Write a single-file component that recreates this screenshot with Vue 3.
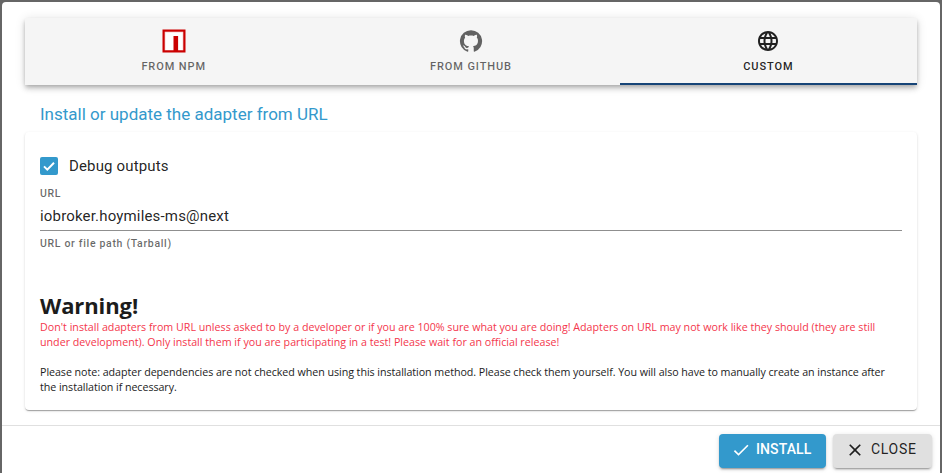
<script setup>
const tabs = [
  { label: 'From npm', icon: 'npm' },
  { label: 'From GitHub', icon: 'github' },
  { label: 'Custom', icon: 'globe', active: true },
]
</script>

<template>
  <div class="backdrop">
    <div class="dialog">
      <div class="content">
        <div class="tabs">
          <div v-for="t in tabs" :key="t.label" class="tab" :class="{ active: t.active }">
            <svg v-if="t.icon === 'npm'" class="ic" width="24" height="24" viewBox="0 0 24 24">
              <rect x="0.5" y="0.5" width="23" height="23" fill="#cb0000" />
              <rect x="2.7" y="2.7" width="18.6" height="18.6" fill="#f6d5d5" />
              <rect x="3.5" y="3.5" width="17" height="17.5" fill="#fff" />
              <rect x="11.5" y="7" width="4.6" height="15" fill="#cb0000" />
            </svg>
            <svg v-else-if="t.icon === 'github'" class="ic" width="24" height="24" viewBox="0 0 24 24">
              <path fill="currentColor" d="M12 1.27a11 11 0 0 0-3.48 21.46c.55.09.73-.28.73-.55v-1.84c-3.03.64-3.67-1.46-3.67-1.46-.55-1.29-1.28-1.65-1.28-1.65-.92-.65.1-.65.1-.65 1.1 0 1.73 1.1 1.73 1.1.92 1.65 2.57 1.2 3.21.92a2.16 2.16 0 0 1 .64-1.47c-2.47-.27-5.04-1.19-5.04-5.5 0-1.1.46-2.1 1.2-2.84a3.76 3.76 0 0 1 0-2.93s.91-.28 3.11 1.1c1.8-.49 3.7-.49 5.5 0 2.1-1.38 3.02-1.1 3.02-1.1a3.76 3.76 0 0 1 0 2.93c.83.74 1.2 1.74 1.2 2.94 0 4.21-2.57 5.13-5.04 5.41.45.37.82.92.82 2.02v3.03c0 .27.1.64.73.55A11 11 0 0 0 12 1.27" />
            </svg>
            <svg v-else class="ic" width="24" height="24" viewBox="0 0 24 24">
              <path fill="currentColor" d="M11.99 2C6.47 2 2 6.48 2 12s4.47 10 9.99 10C17.52 22 22 17.52 22 12S17.52 2 11.99 2zm6.93 6h-2.95c-.32-1.25-.78-2.45-1.38-3.56 1.84.63 3.37 1.91 4.33 3.56zM12 4.04c.83 1.2 1.48 2.53 1.91 3.96h-3.82c.43-1.43 1.08-2.76 1.91-3.96zM4.26 14C4.1 13.36 4 12.69 4 12s.1-1.36.26-2h3.38c-.08.66-.14 1.32-.14 2 0 .68.06 1.34.14 2H4.26zm.82 2h2.95c.32 1.25.78 2.45 1.38 3.56-1.84-.63-3.37-1.9-4.33-3.56zm2.95-8H5.08c.96-1.66 2.49-2.93 4.33-3.56C8.81 5.55 8.35 6.75 8.03 8zM12 19.96c-.83-1.2-1.48-2.53-1.91-3.96h3.82c-.43 1.43-1.08 2.76-1.91 3.96zM14.34 14H9.66c-.09-.66-.16-1.32-.16-2 0-.68.07-1.35.16-2h4.68c.09.65.16 1.32.16 2 0 .68-.07 1.34-.16 2zm.25 5.56c.6-1.11 1.06-2.31 1.38-3.56h2.95c-.96 1.65-2.49 2.93-4.33 3.56zM16.36 14c.08-.66.14-1.32.14-2 0-.68-.06-1.34-.14-2h3.38c.16.64.26 1.31.26 2s-.1 1.36-.26 2h-3.38z" />
            </svg>
            <span class="tab-label">{{ t.label }}</span>
          </div>
        </div>

        <div class="title">Install or update the adapter from URL</div>

        <div class="card">
          <label class="check-row">
            <span class="box">
              <svg width="18" height="18" viewBox="0 0 18 18">
                <path d="M4 9.4l3.3 3.2L14 5.8" fill="none" stroke="#fff" stroke-width="2" />
              </svg>
            </span>
            <span class="check-label">Debug outputs</span>
          </label>

          <div class="field">
            <div class="field-label">URL</div>
            <div class="field-value">iobroker.hoymiles-ms@next</div>
            <div class="field-help">URL or file path (Tarball)</div>
          </div>

          <h2 class="warn-title">Warning!</h2>
          <p class="warn-text">Don't install adapters from URL unless asked to by a developer or if you are 100% sure what you are doing! Adapters on URL may not work like they should (they are still under development). Only install them if you are participating in a test! Please wait for an official release!</p>
          <p class="note-text">Please note: adapter dependencies are not checked when using this installation method. Please check them yourself. You will also have to manually create an instance after the installation if necessary.</p>
        </div>
      </div>

      <div class="actions">
        <button class="btn primary">
          <svg width="20" height="20" viewBox="0 0 24 24"><path fill="currentColor" d="M9 16.17 4.83 12l-1.42 1.41L9 19 21 7l-1.41-1.41z" /></svg>
          <span class="btn-text">Install</span>
        </button>
        <button class="btn grey">
          <svg width="20" height="20" viewBox="0 0 24 24"><path fill="currentColor" d="M19 6.41 17.59 5 12 10.59 6.41 5 5 6.41 10.59 12 5 17.59 6.41 19 12 13.41 17.59 19 19 17.59 13.41 12z" /></svg>
          <span class="btn-text">Close</span>
        </button>
      </div>
    </div>
  </div>
</template>

<style>
html, body { margin: 0; overflow: hidden; background: #5f5f5f; }
</style>

<style scoped>
.backdrop {
  width: 942px;
  height: 473px;
  box-sizing: border-box;
  padding: 2px 2px 0 2px;
  background: #666;
  overflow: hidden;
  font-family: Roboto, sans-serif;
}
.dialog {
  height: 480px;
  background: #fff;
  border-radius: 4px 4px 0 0;
  display: flex;
  flex-direction: column;
}
.content {
  height: 424px;
  box-sizing: border-box;
  padding: 16px 23px 0 23px;
  border-bottom: 1px solid #e0e0e0;
}
.tabs {
  display: grid;
  grid-template-columns: repeat(3, 1fr);
  height: 67px;
  background: #f5f5f5;
  box-shadow: 0 2px 4px -1px rgba(0,0,0,.2), 0 4px 5px 0 rgba(0,0,0,.14), 0 1px 10px 0 rgba(0,0,0,.12);
}
.tab {
  display: flex;
  flex-direction: column;
  align-items: center;
  padding-top: 11px;
  box-sizing: border-box;
  color: rgba(0,0,0,.6);
}
.tab.active {
  color: rgba(0,0,0,.87);
  border-bottom: 2px solid #164477;
}
.ic { display: block; }
.tab-label {
  margin-top: 7px;
  font-size: 11px;
  line-height: 14px;
  font-weight: 500;
  letter-spacing: .9px;
  text-transform: uppercase;
}
.title {
  margin: 18px 0 0 15px;
  font-size: 17px;
  line-height: 22px;
  color: #3399cc;
}
.card {
  margin-top: 7px;
  height: 278px;
  box-sizing: border-box;
  padding: 0 15px;
  border-radius: 4px;
  background: #fff;
  box-shadow: 0 2px 1px -1px rgba(0,0,0,.2), 0 1px 1px 0 rgba(0,0,0,.14), 0 1px 3px 0 rgba(0,0,0,.12);
}
.check-row {
  display: flex;
  align-items: center;
  gap: 11px;
  padding-top: 25px;
  height: 18px;
}
.box {
  width: 18px;
  height: 18px;
  border-radius: 2px;
  background: #3399cc;
  display: block;
}
.box svg { display: block; }
.check-label {
  font-size: 15px;
  line-height: 18px;
  letter-spacing: .15px;
  color: rgba(0,0,0,.87);
}
.field { margin-top: 13px; }
.field-label {
  font-size: 10.5px;
  line-height: 12px;
  font-weight: 500;
  letter-spacing: .6px;
  color: rgba(0,0,0,.6);
}
.field-value {
  margin-top: 5px;
  height: 26px;
  line-height: 23px;
  box-sizing: border-box;
  border-bottom: 1px solid #8f8f8f;
  font-size: 15px;
  letter-spacing: .17px;
  color: rgba(0,0,0,.87);
}
.field-help {
  margin-top: 6px;
  font-size: 10.5px;
  line-height: 14px;
  font-weight: 500;
  letter-spacing: .68px;
  color: rgba(0,0,0,.6);
}
.warn-title {
  margin: 40px 0 0;
  font-family: "Open Sans", sans-serif;
  font-size: 22px;
  line-height: 28px;
  font-weight: 700;
  letter-spacing: -.1px;
  color: #1c1c1c;
}
.warn-text, .note-text {
  font-family: "Open Sans", sans-serif;
  font-size: 10.7px;
  line-height: 15px;
  margin: 0;
}
.warn-text { color: #f4364c; margin-top: 1px; }
.note-text { color: #1c1c1c; margin-top: 15px; letter-spacing: -.05px; }
.actions {
  display: flex;
  justify-content: flex-end;
  gap: 7px;
  padding: 8px 8px 0 0;
}
.btn {
  height: 34px;
  border: 0;
  border-radius: 4px;
  display: flex;
  align-items: center;
  gap: 5px;
  font-family: Roboto, sans-serif;
  font-size: 14px;
  font-weight: 500;
  letter-spacing: .1px;
  text-transform: uppercase;
  padding: 0 10px 2px 12px;
  box-shadow: 0 3px 1px -2px rgba(0,0,0,.2), 0 2px 2px 0 rgba(0,0,0,.14), 0 1px 5px 0 rgba(0,0,0,.12);
}
.btn-text { margin-bottom: 2px; }
.btn.primary { background: #3399cc; color: #fff; width: 107px; }
.btn.grey { background: #e0e0e0; color: rgba(0,0,0,.87); width: 99px; gap: 6px; font-weight: 400; letter-spacing: .7px; }
</style>
